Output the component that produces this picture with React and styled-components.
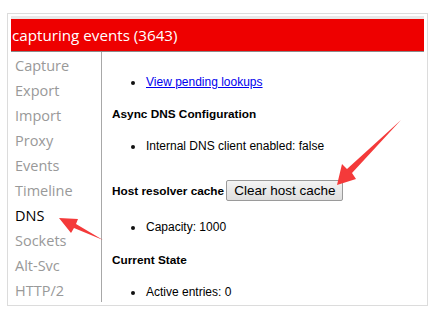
import React from 'react'
import styled, { createGlobalStyle } from 'styled-components'

const Global = createGlobalStyle`
    html, body {
        margin: 0;
        padding: 0;
        background: #fff;
    }
    body {
        width: 445px;
        height: 318px;
        overflow: hidden;
        position: relative;
    }
`

const Page = styled.div`
    position: relative;
    width: 445px;
    height: 318px;
    padding: 13px 0 0 7px;
    box-sizing: border-box;
`

const Frame = styled.div`
    width: 421px;
    height: 293px;
    box-sizing: border-box;
    border: 1px solid #dcdcdc;
    padding: 2px 3px 0 3px;
    display: flex;
    flex-direction: column;
`

const Header = styled.div`
    border-top: 3px solid #e8e8e8;
    background: #ee0000;
    color: #fff;
    height: 32px;
    box-sizing: content-box;
    border-bottom: 1px solid #8a8a8a;
    font-family: "Open Sans", "Noto Sans", sans-serif;
    font-size: 15.2px;
    line-height: 32px;
    padding-left: 1px;
    white-space: nowrap;
`

const Body = styled.div`
    display: flex;
    height: 250px;
`

const Sidebar = styled.div`
    width: 91px;
    flex: none;
    border-right: 1px solid #a8a8a8;
    padding-top: 1px;
    box-sizing: border-box;
`

const Tab = styled.div`
    font-family: "Open Sans", "Noto Sans", sans-serif;
    font-size: 14.5px;
    line-height: 25px;
    padding-left: 4px;
    color: ${p => (p.$active ? '#000' : '#999')};
`

const Content = styled.div`
    flex: 1;
    padding: 22px 0 0 10px;
    font-family: "Liberation Sans", Arial, sans-serif;
    font-size: 12px;
    line-height: 16px;
    color: #000;
`

const Item = styled.div`
    position: relative;
    padding-left: 34px;
    margin-top: ${p => p.$gap || 0}px;
    &::before {
        content: '';
        position: absolute;
        left: 19px;
        top: 7px;
        width: 4px;
        height: 4px;
        border-radius: 50%;
        background: #111;
    }
`

const Link = styled.a`
    color: #0000ee;
    text-decoration: underline;
    cursor: pointer;
`

const Heading = styled.div`
    font-weight: bold;
    font-size: 11.8px;
    margin-top: ${p => p.$gap || 0}px;
    display: flex;
    align-items: center;
    gap: 2px;
`

const Button = styled.button`
    font-family: "Liberation Sans", Arial, sans-serif;
    font-size: 13.5px;
    height: 21px;
    padding: 0 7px;
    border: 1px solid #9a9a9a;
    border-radius: 2px;
    background: linear-gradient(#f4f4f4, #dedede);
    color: #000;
    line-height: 19px;
`

const Overlay = styled.svg`
    position: absolute;
    left: 0;
    top: 0;
    pointer-events: none;
`

const tabs = ['Capture', 'Export', 'Import', 'Proxy', 'Events', 'Timeline', 'DNS', 'Sockets', 'Alt-Svc', 'HTTP/2']

export default function App() {
    return (
        <Page>
            <Global />
            <Frame>
                <Header>capturing events (3643)</Header>
                <Body>
                    <Sidebar>
                        {tabs.map(t => (
                            <Tab key={t} $active={t === 'DNS'}>{t}</Tab>
                        ))}
                    </Sidebar>
                    <Content>
                        <Item><Link>View pending lookups</Link></Item>
                        <Heading $gap={16}>Async DNS Configuration</Heading>
                        <Item $gap={16}>Internal DNS client enabled: false</Item>
                        <Heading $gap={26} style={{ height: 21 }}>
                            Host resolver cache<Button>Clear host cache</Button>
                        </Heading>
                        <Item $gap={18}>Capacity: 1000</Item>
                        <Heading $gap={17}>Current State</Heading>
                        <Item $gap={16}>Active entries: 0</Item>
                    </Content>
                </Body>
            </Frame>
            <Overlay width="445" height="318" viewBox="0 0 445 318">
                <polygon
                    fill="#f43a3a"
                    points="401,120 352,173 356,179 337,185 342,164 347,169"
                />
                <polygon
                    fill="#f43a3a"
                    points="103,240 74,228 71,233 59,218 78,219 76,224"
                />
            </Overlay>
        </Page>
    )
}
